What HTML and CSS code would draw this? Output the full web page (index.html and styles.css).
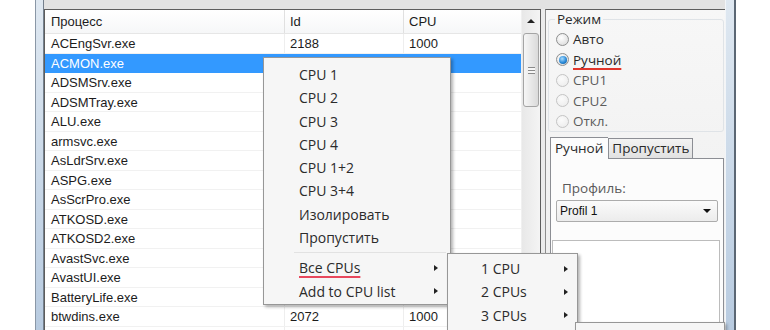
FILE: index.html
```html
<!DOCTYPE html>
<html lang="ru">
  <head>
    <meta charset="UTF-8" />
    <meta name="viewport" content="width=device-width, initial-scale=1.0" />
    <title>Процессы</title>
    <link rel="stylesheet" href="styles.css">
  </head>

  <body>
    <div class="window">
      <div class="client">
        <div class="topbar"></div>
        <div class="main">
          <div class="procs">
            <div class="grid">
              <div class="head">
                <span class="c1">Процесс</span>
                <span class="c2">Id</span>
                <span class="c3">CPU</span>
              </div>
              <div class="row"><span class="c1">ACEngSvr.exe</span><span class="c2">2188</span><span class="c3">1000</span></div>
              <div class="row selected"><span class="c1">ACMON.exe</span><span class="c2"></span><span class="c3"></span></div>
              <div class="row"><span class="c1">ADSMSrv.exe</span><span class="c2"></span><span class="c3"></span></div>
              <div class="row"><span class="c1">ADSMTray.exe</span><span class="c2"></span><span class="c3"></span></div>
              <div class="row"><span class="c1">ALU.exe</span><span class="c2"></span><span class="c3"></span></div>
              <div class="row"><span class="c1">armsvc.exe</span><span class="c2"></span><span class="c3"></span></div>
              <div class="row"><span class="c1">AsLdrSrv.exe</span><span class="c2"></span><span class="c3"></span></div>
              <div class="row"><span class="c1">ASPG.exe</span><span class="c2"></span><span class="c3"></span></div>
              <div class="row"><span class="c1">AsScrPro.exe</span><span class="c2"></span><span class="c3"></span></div>
              <div class="row"><span class="c1">ATKOSD.exe</span><span class="c2"></span><span class="c3"></span></div>
              <div class="row"><span class="c1">ATKOSD2.exe</span><span class="c2"></span><span class="c3"></span></div>
              <div class="row"><span class="c1">AvastSvc.exe</span><span class="c2"></span><span class="c3"></span></div>
              <div class="row"><span class="c1">AvastUI.exe</span><span class="c2"></span><span class="c3"></span></div>
              <div class="row"><span class="c1">BatteryLife.exe</span><span class="c2"></span><span class="c3"></span></div>
              <div class="row"><span class="c1">btwdins.exe</span><span class="c2">2072</span><span class="c3">1000</span></div>
              <div class="row"><span class="c1"></span><span class="c2"></span><span class="c3"></span></div>
            </div>
            <div class="vscroll">
              <div class="up"></div>
              <div class="thumb"><span class="grip"></span></div>
            </div>
          </div>

          <div class="side">
            <fieldset class="group">
              <legend>Режим</legend>
              <div class="radio"><span class="dot"></span>Авто</div>
              <div class="radio"><span class="dot checked"></span><span class="mark">Ручной</span></div>
              <div class="radio off"><span class="dot"></span>CPU1</div>
              <div class="radio off"><span class="dot"></span>CPU2</div>
              <div class="radio off"><span class="dot"></span>Откл.</div>
            </fieldset>
            <div class="tabs">
              <div class="tab active">Ручной</div>
              <div class="tab">Пропустить</div>
            </div>
            <div class="tabpanel">
              <div class="label">Профиль:</div>
              <div class="combo"><span>Profil 1</span><span class="down"></span></div>
              <div class="listbox"></div>
            </div>
          </div>
        </div>
      </div>
    </div>

    <div class="menu menu-main">
      <div class="item">CPU 1</div>
      <div class="item">CPU 2</div>
      <div class="item">CPU 3</div>
      <div class="item">CPU 4</div>
      <div class="item">CPU 1+2</div>
      <div class="item">CPU 3+4</div>
      <div class="item">Изолировать</div>
      <div class="item">Пропустить</div>
      <div class="sep"></div>
      <div class="item"><span class="mark">Все CPUs</span><span class="arrow"></span></div>
      <div class="item"><span>Add to CPU list</span><span class="arrow"></span></div>
    </div>

    <div class="menu menu-sub">
      <div class="item"><span>1 CPU</span><span class="arrow"></span></div>
      <div class="item"><span>2 CPUs</span><span class="arrow"></span></div>
      <div class="item"><span>3 CPUs</span><span class="arrow"></span></div>
    </div>

    <div class="menu menu-sub2"></div>
  </body>
</html>
```

FILE: styles.css
```css
body {
  margin: 0;
  background: #fff;
  font-family: "Liberation Sans", Arial, sans-serif;
  overflow: hidden;
}

/* window frame */
.window {
  display: flex;
  width: 701px;
  height: 330px;
  margin-left: 35px;
  box-sizing: border-box;
  padding: 0 8px 0 7px;
  border-left: 1px solid #8a97a6;
  border-right: 2px solid #5b6774;
  background: linear-gradient(to bottom, #dfe8f1, #c9d8e8 55%, #b8cbe0);
}

.client {
  flex: 1;
  display: flex;
  flex-direction: column;
  background: #ebebeb;
  border-left: 1px solid #74808d;
  border-right: 1px solid #f2f5f8;
}

.topbar {
  height: 9px;
  background: #e2e2e2;
}

.main {
  flex: 1;
  display: flex;
  gap: 4px;
  min-height: 0;
}

/* process list */
.procs {
  width: 497px;
  box-sizing: border-box;
  display: flex;
  border: 1px solid #5d5d5d;
  border-bottom: 0;
  background: #fff;
  font-size: 13px;
  color: #1c1c1c;
  overflow: hidden;
}

.grid {
  width: 476px;
}

.head,
.row {
  display: flex;
}

.head {
  height: 24px;
  line-height: 23px;
  box-sizing: border-box;
  border-bottom: 1px solid #e6e6e6;
  background: linear-gradient(#ffffff, #f6f7f8);
}

.row {
  height: 19.5px;
  line-height: 19.5px;
  box-sizing: border-box;
  border-bottom: 1px solid #f1f1f1;
}

.c1,
.c2,
.c3 {
  box-sizing: border-box;
  white-space: nowrap;
}

.c1 {
  width: 240px;
  padding-left: 6px;
  border-right: 1px solid #eeeeee;
}

.c2 {
  width: 119px;
  padding-left: 5px;
  border-right: 1px solid #eeeeee;
}

.c3 {
  width: 117px;
  padding-left: 5px;
}

.head .c1,
.head .c2 {
  border-right-color: #e0e0e0;
}

.row.selected {
  background: #3399ff;
  color: #fff;
  border-bottom-color: #3399ff;
}

.row.selected span {
  border-right-color: #3399ff;
}

.vscroll {
  width: 19px;
  display: flex;
  flex-direction: column;
  background: linear-gradient(to right, #e8e8e8, #f4f4f4);
  border-left: 1px solid #f0f0f0;
  box-sizing: border-box;
}

.vscroll .up {
  height: 22px;
  display: flex;
  align-items: center;
  justify-content: center;
}

.vscroll .up::before {
  content: "";
  border-left: 4px solid transparent;
  border-right: 4px solid transparent;
  border-bottom: 4px solid #222;
}

.thumb {
  margin: 1px 1px 0;
  height: 72px;
  border: 1px solid #a4a4a4;
  border-radius: 3px;
  background: linear-gradient(to right, #f6f6f6, #e8e8e8 50%, #dadada);
  display: flex;
  align-items: center;
  justify-content: center;
}

.grip {
  width: 7px;
  height: 7px;
  background: repeating-linear-gradient(#8a8a8a 0 1px, #f6f6f6 1px 3px);
}

/* right side panel */
.side {
  flex: 1;
  display: flex;
  flex-direction: column;
  border-top: 1px solid #5d5d5d;
  border-left: 1px solid #8d8d8d;
  background: linear-gradient(#f7f7f7, #ededed);
  padding: 0 1px 0 2px;
  font-family: "Open Sans", "Noto Sans", sans-serif;
  font-size: 13.5px;
  color: #2a2a2a;
}

.group {
  margin: 0;
  padding: 0 0 0 6px;
  border: 1px solid #dfe3e7;
  border-radius: 3px;
  height: 122px;
  box-sizing: border-box;
}

.group legend {
  padding: 0 2px;
  line-height: 18px;
}

.radio {
  height: 20.5px;
  display: flex;
  align-items: center;
  gap: 4px;
}

.radio:first-of-type {
  margin-top: 1px;
}

.dot {
  width: 13px;
  height: 13px;
  margin-left: 1px;
  box-sizing: border-box;
  border: 1px solid #8e8f8f;
  border-radius: 50%;
  background: radial-gradient(circle at 40% 35%, #ffffff, #e2e2e2 70%, #cfcfcf);
  display: flex;
  align-items: center;
  justify-content: center;
}

.dot.checked::before {
  content: "";
  width: 8px;
  height: 8px;
  border-radius: 50%;
  background: radial-gradient(circle at 40% 35%, #a8dcff, #2a8ad8 55%, #0b4f8c);
}

.radio.off {
  color: #5c5c5c;
}

.radio.off .dot {
  border-color: #c4c4c4;
  background: radial-gradient(circle at 40% 35%, #fbfbfb, #eaeaea);
}

.mark {
  text-decoration: underline;
  text-decoration-color: #e0352b;
  text-decoration-thickness: 2px;
  text-underline-offset: 3px;
}

.tabs {
  display: flex;
  align-items: flex-end;
  margin: 5px 0 0 2px;
}

.tab {
  height: 19px;
  line-height: 18px;
  padding: 0 3px;
  border: 1px solid #8c8e94;
  border-bottom: 0;
  background: linear-gradient(#f3f3f3, #e1e1e1);
}

.tab.active {
  height: 21px;
  line-height: 20px;
  padding: 0 5px 0 4px;
  background: #fcfcfc;
  border-right: 0;
  margin-bottom: -1px;
  position: relative;
}

.tabpanel {
  flex: 1;
  margin-left: 2px;
  border: 1px solid #8c8e94;
  border-bottom: 0;
  background: #fcfcfc;
  display: flex;
  flex-direction: column;
}

.tabpanel .label {
  margin: 20px 0 0 11px;
  line-height: 18px;
  color: #5a5a5a;
}

.combo {
  margin: 3px 5px 0 5px;
  height: 22px;
  box-sizing: border-box;
  border: 1px solid #acacac;
  border-radius: 2px;
  background: linear-gradient(#fbfbfb, #ececec);
  display: flex;
  align-items: center;
  justify-content: space-between;
  padding: 0 6px 0 3px;
  font-family: "Liberation Sans", Arial, sans-serif;
  font-size: 12px;
  color: #111;
}

.combo .down {
  border-left: 4px solid transparent;
  border-right: 4px solid transparent;
  border-top: 4px solid #111;
}

.listbox {
  flex: 1;
  margin: 18px 3px 0 1px;
  border: 1px solid #bcbcbc;
  border-bottom: 0;
  background: #fff;
}

/* context menus */
.menu {
  position: absolute;
  box-sizing: border-box;
  background: #f6f6f6;
  border: 1px solid #979797;
  box-shadow: 2px 2px 3px rgba(0, 0, 0, 0.3);
  font-family: "Open Sans", "Noto Sans", sans-serif;
  font-size: 14px;
  color: #2b2b2b;
}

.menu .item {
  height: 23.3px;
  line-height: 23.3px;
  display: flex;
  justify-content: space-between;
  align-items: center;
  white-space: nowrap;
}

.menu .arrow {
  border-top: 3.5px solid transparent;
  border-bottom: 3.5px solid transparent;
  border-left: 4px solid #222;
}

.menu .mark {
  text-decoration-color: #e8485d;
  text-decoration-thickness: 1.5px;
}

.menu-main {
  left: 263px;
  top: 57px;
  width: 188px;
  height: 248px;
  padding: 5px 2px 1px;
}

.menu-main .item {
  padding: 0 10px 0 33px;
}

.sep {
  height: 1px;
  margin: 3px 2px 3px 28px;
  background: #e2e2e2;
}

.menu-sub {
  left: 447px;
  top: 253px;
  width: 131px;
  height: 100px;
  padding: 3px 2px;
}

.menu-sub .item {
  padding: 0 7px 0 31px;
}

.menu-sub2 {
  left: 575px;
  top: 322px;
  width: 150px;
  height: 60px;
}
```
